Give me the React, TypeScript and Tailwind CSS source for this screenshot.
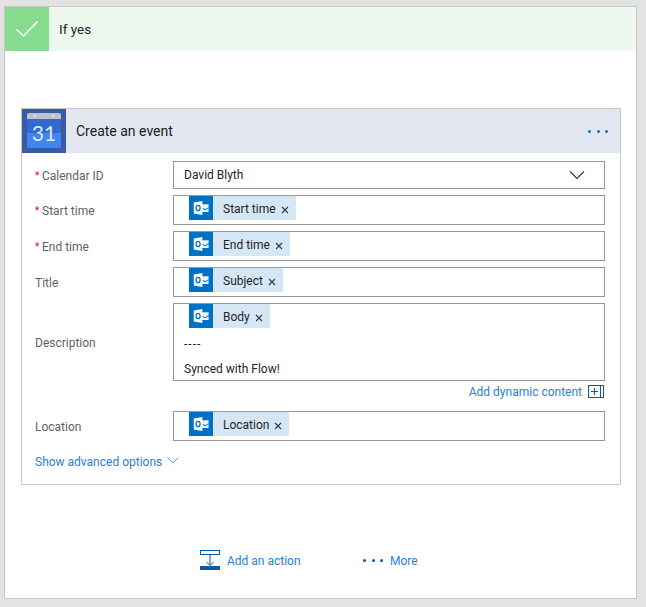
const font = "font-['Roboto','Liberation_Sans',sans-serif]";

function OutlookIcon() {
  return (
    <div className="flex h-6 w-6 shrink-0 items-center justify-center bg-[#0072c6]">
      <svg width="16" height="16" viewBox="0 0 16 16">
        <path d="M8.5 4.2 15.6 4.2 15.6 7.2 12 9.2 8.5 7.2Z" fill="#fff" opacity="0.9" />
        <path d="M8.5 8.3 12 10.3 15.6 8.3 15.6 12 8.5 12Z" fill="#fff" opacity="0.9" />
        <path d="M0.8 2.6 9.4 1 9.4 15 0.8 13.4Z" fill="#fff" />
        <ellipse cx="5.1" cy="8" rx="2" ry="2.7" fill="none" stroke="#0072c6" strokeWidth="1.3" />
      </svg>
    </div>
  );
}

function Chip({ label }: { label: string }) {
  return (
    <div className="ml-[15px] flex h-6 items-center bg-[#d5e6f4] text-xs text-[#1f1f1f]">
      <OutlookIcon />
      <span className="ml-[10px] pt-[1px] leading-[22px]">{label}</span>
      <svg className="ml-[5px] mr-[7px] mt-[3px]" width="8" height="8" viewBox="0 0 8 8">
        <path d="M1 1 7 7M7 1 1 7" stroke="#2b3a4a" strokeWidth="1.1" fill="none" />
      </svg>
    </div>
  );
}

function Row({ label, required, children }: { label: string; required?: boolean; children: React.ReactNode }) {
  return (
    <div className="flex items-center">
      <div className="flex w-[138px] shrink-0 items-center pt-[2px] text-xs text-[#5f5f62]">
        {required && <span className="w-[7px] text-[10px] leading-none text-[#e0001b]">*</span>}
        <span>{label}</span>
      </div>
      {children}
    </div>
  );
}

function TokenField({ label }: { label: string }) {
  return (
    <div className="flex h-[30px] w-[432px] items-start border border-[#979797] bg-white">
      <Chip label={label} />
    </div>
  );
}

function CalendarIcon() {
  return (
    <div className="flex h-11 w-11 shrink-0 items-center justify-center bg-[#3a5ba2]">
      <svg width="36" height="36" viewBox="0 0 36 36">
        <path d="M1 2a2 2 0 0 1 2-2h30a2 2 0 0 1 2 2v4H1Z" fill="#bfc3c9" />
        <circle cx="9" cy="3" r="1" fill="#eef0f3" />
        <circle cx="27" cy="3" r="1" fill="#eef0f3" />
        <path d="M1 6h34v14H1Z" fill="#2f6ad0" />
        <path d="M1 20h34v13a2 2 0 0 1-2 2H3a2 2 0 0 1-2-2Z" fill="#4285f0" />
        <text x="18" y="28" textAnchor="middle" fontSize="21" fill="#dfe9fa" fontFamily="Lato, sans-serif">31</text>
      </svg>
    </div>
  );
}

export default function App() {
  return (
    <div className={`${font} h-[607px] w-[646px] overflow-hidden bg-[#e3e3e3] pl-1 pt-[6px]`}>
      <div className="h-[593px] w-[633px] border border-[#c8c8c8] bg-white">
        <div className="flex h-11 items-center bg-[#edf8ee]">
          <div className="flex h-11 w-11 items-center justify-center bg-[#88dc8f]">
            <svg width="24" height="18" viewBox="0 0 24 18">
              <path d="M1.5 9.5 8.500 16 22.500 1.500" stroke="#fff" strokeWidth="1.6" fill="none" />
            </svg>
          </div>
          <span className="ml-[10px] pt-[1px] text-[13.5px] text-[#1f1f2e]">If yes</span>
        </div>

        <div className="ml-4 mr-[15px] mt-[57px] h-[377px] border border-[#c8c8c8]">
          <div className="flex h-11 items-center bg-[#e2e6f0]">
            <CalendarIcon />
            <span className="ml-[10px] text-sm text-[#1a1a1a]">Create an event</span>
            <div className="ml-auto mr-[12px] flex gap-[5.5px]">
              <span className="h-[3px] w-[3px] rounded-full bg-[#0078d7]" />
              <span className="h-[3px] w-[3px] rounded-full bg-[#0078d7]" />
              <span className="h-[3px] w-[3px] rounded-full bg-[#0078d7]" />
            </div>
          </div>

          <div className="flex flex-col gap-[6px] pl-[13px] pt-2">
            <Row label="Calendar ID" required>
              <div className="flex h-7 w-[432px] items-center justify-between border border-[#979797] bg-white pl-[10px] pr-[19px] text-xs text-[#1f1f1f]">
                <span>David Blyth</span>
                <svg width="16" height="10" viewBox="0 0 16 10">
                  <path d="M1 1.5 8 8.5 15 1.5" stroke="#333" strokeWidth="1.1" fill="none" />
                </svg>
              </div>
            </Row>
            <Row label="Start time" required><TokenField label="Start time" /></Row>
            <Row label="End time" required><TokenField label="End time" /></Row>
            <Row label="Title"><TokenField label="Subject" /></Row>
            <Row label="Description">
              <div className="flex h-[78px] w-[432px] flex-col items-start border border-[#979797] bg-white text-xs text-[#1f1f1f]">
                <Chip label="Body" />
                <span className="ml-[10px] mt-[8px] leading-[17px] tracking-[1px]">----</span>
                <span className="ml-[10px] mt-2 leading-[17px]">Synced with Flow!</span>
              </div>
            </Row>
          </div>

          <div className="flex h-[30px] items-start justify-end pr-4 pt-[3px] text-xs text-[#2a7fd4]">
            <span className="leading-[17px]">Add dynamic content</span>
            <div className="ml-[6px] mt-[1px] flex h-[13px] w-[16px] border border-[#0a5aa8]">
              <div className="flex flex-1 items-center justify-center border-r border-[#0a5aa8]">
                <svg width="7" height="7" viewBox="0 0 7 7">
                  <path d="M3.5 0V7M0 3.5H7" stroke="#0a5aa8" strokeWidth="1.2" />
                </svg>
              </div>
              <div className="w-[2px]" />
            </div>
          </div>

          <div className="pl-[13px]">
            <Row label="Location"><TokenField label="Location" /></Row>
          </div>

          <div className="ml-[13px] mt-[13px] flex items-center text-xs text-[#2a7fd4]">
            <span>Show advanced options</span>
            <svg className="ml-[5px] mb-[3px]" width="12" height="7" viewBox="0 0 12 7">
              <path d="M0.5 0.5 6 6 11.500 0.5" stroke="#2a7fd4" strokeWidth="0.8" fill="none" />
            </svg>
          </div>
        </div>

        <div className="ml-[195px] mt-[65px] flex h-5 items-center text-xs text-[#2a7fd4]">
          <svg width="20" height="20" viewBox="0 0 20 20">
            <rect x="0.5" y="0.500" width="19" height="4" fill="none" stroke="#0a5aa8" />
            <path d="M10 5V15M6.500 12 10 15.500 13.500 12" fill="none" stroke="#0a5aa8" />
            <rect x="0" y="16" width="20" height="4" fill="#0a5aa8" />
          </svg>
          <span className="ml-[7px] w-[136px] pt-[1px]">Add an action</span>
          <div className="flex gap-[5.5px]">
            <span className="h-[3px] w-[3px] rounded-full bg-[#0a5aa8]" />
            <span className="h-[3px] w-[3px] rounded-full bg-[#0a5aa8]" />
            <span className="h-[3px] w-[3px] rounded-full bg-[#0a5aa8]" />
          </div>
          <span className="ml-[7px] pt-[1px]">More</span>
        </div>
      </div>
    </div>
  );
}
